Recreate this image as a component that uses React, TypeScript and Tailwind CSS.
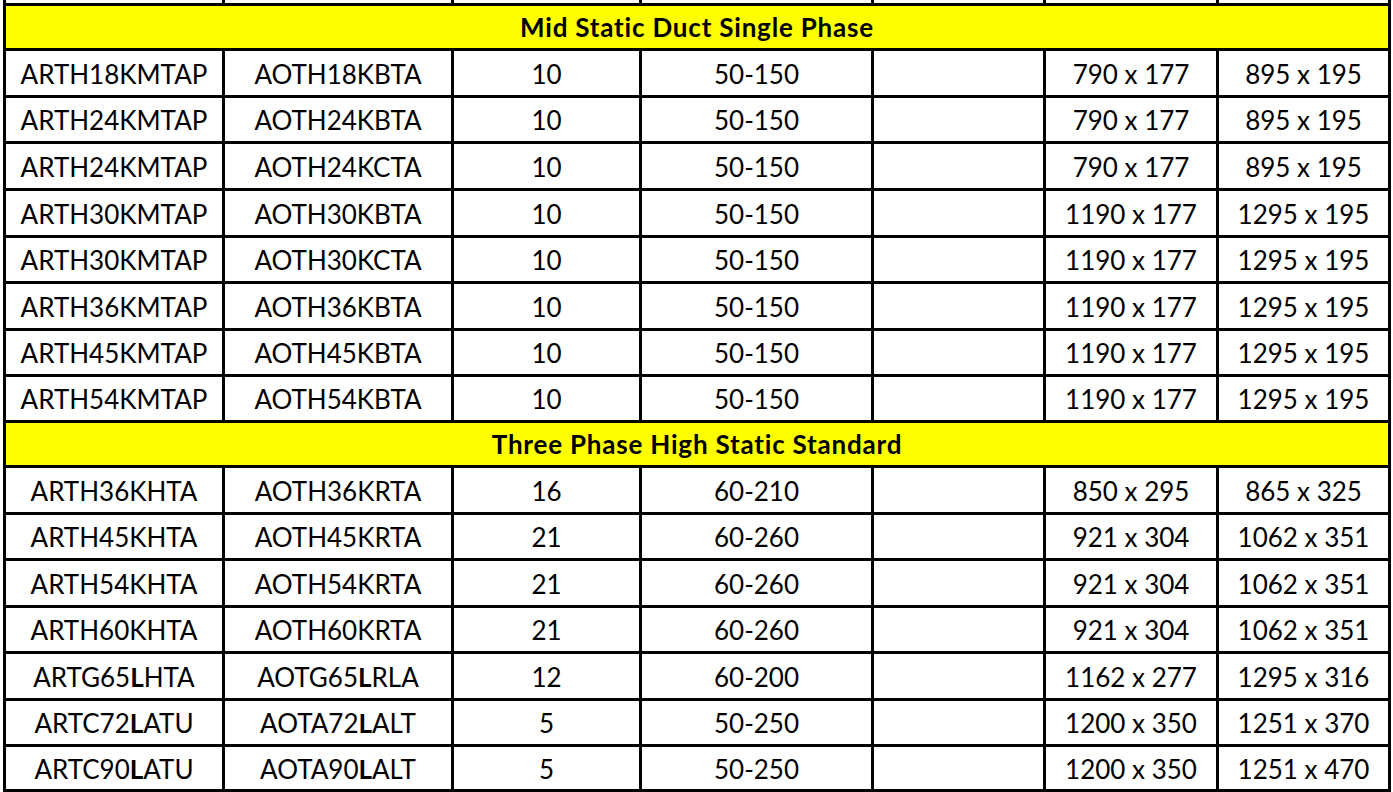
import React from "react";

type Cell = string;
type DataRow = { cells: Cell[]; h: string };
type Section = { title: string; h: string; rows: DataRow[] };

const W = ["w-[216px]", "w-[226px]", "w-[185px]", "w-[229px]", "w-[169px]", "w-[170px]", "w-[169px]"];

const sections: Section[] = [
  {
    title: "Mid Static Duct Single Phase",
    h: "h-[42px]",
    rows: [
      { cells: ["ARTH18KMTAP", "AOTH18KBTA", "10", "50-150", "", "790 x 177", "895 x 195"], h: "h-[44px]" },
      { cells: ["ARTH24KMTAP", "AOTH24KBTA", "10", "50-150", "", "790 x 177", "895 x 195"], h: "h-[43px]" },
      { cells: ["ARTH24KMTAP", "AOTH24KCTA", "10", "50-150", "", "790 x 177", "895 x 195"], h: "h-[44px]" },
      { cells: ["ARTH30KMTAP", "AOTH30KBTA", "10", "50-150", "", "1190 x 177", "1295 x 195"], h: "h-[44px]" },
      { cells: ["ARTH30KMTAP", "AOTH30KCTA", "10", "50-150", "", "1190 x 177", "1295 x 195"], h: "h-[43px]" },
      { cells: ["ARTH36KMTAP", "AOTH36KBTA", "10", "50-150", "", "1190 x 177", "1295 x 195"], h: "h-[44px]" },
      { cells: ["ARTH45KMTAP", "AOTH45KBTA", "10", "50-150", "", "1190 x 177", "1295 x 195"], h: "h-[43px]" },
      { cells: ["ARTH54KMTAP", "AOTH54KBTA", "10", "50-150", "", "1190 x 177", "1295 x 195"], h: "h-[43px]" },
    ],
  },
  {
    title: "Three Phase High Static Standard",
    h: "h-[42px]",
    rows: [
      { cells: ["ARTH36KHTA", "AOTH36KRTA", "16", "60-210", "", "850 x 295", "865 x 325"], h: "h-[44px]" },
      { cells: ["ARTH45KHTA", "AOTH45KRTA", "21", "60-260", "", "921 x 304", "1062 x 351"], h: "h-[43px]" },
      { cells: ["ARTH54KHTA", "AOTH54KRTA", "21", "60-260", "", "921 x 304", "1062 x 351"], h: "h-[44px]" },
      { cells: ["ARTH60KHTA", "AOTH60KRTA", "21", "60-260", "", "921 x 304", "1062 x 351"], h: "h-[43px]" },
      { cells: ["ARTG65*L*HTA", "AOTG65*L*RLA", "12", "60-200", "", "1162 x 277", "1295 x 316"], h: "h-[44px]" },
      { cells: ["ARTC72*L*ATU", "AOTA72*L*ALT", "5", "50-250", "", "1200 x 350", "1251 x 370"], h: "h-[43px]" },
      { cells: ["ARTC90*L*ATU", "AOTA90*L*ALT", "5", "50-250", "", "1200 x 350", "1251 x 470"], h: "h-[42px]" },
    ],
  },
];

function renderText(t: string) {
  const parts = t.split("*");
  return parts.map((p, i) =>
    i % 2 === 1 ? (
      <span key={i} className="font-bold">
        {p}
      </span>
    ) : (
      <span key={i}>{p}</span>
    )
  );
}

export default function App() {
  return (
    <div
      className="w-[1393px] h-[792px] overflow-hidden bg-white text-black"
      style={{ fontFamily: "Lato, 'Open Sans', sans-serif" }}
    >
      <div className="ml-[3px] w-max border-l-[3px] border-black">
        {/* partial row at top */}
        <div className="flex h-[3px]">
          {W.map((w, i) => (
            <div key={i} className={`${w} box-content border-r-[3px] border-black`} />
          ))}
        </div>
        <div className="border-t-[3px] border-black">
          {sections.map((s, si) => (
            <div key={si}>
              <div
                className={`${s.h} w-[1382px] box-content bg-[#ffff00] border-r-[3px] border-b-[3px] border-black flex items-center justify-center text-[26px] tracking-[0.8px] font-bold leading-none`}
              >
                {s.title}
              </div>
              {s.rows.map((r, ri) => (
                <div key={ri} className={`flex ${r.h} box-content border-b-[3px] border-black`}>
                  {r.cells.map((c, ci) => (
                    <div
                      key={ci}
                      className={`${W[ci]} box-content border-r-[3px] border-black flex items-center justify-center text-[26px] leading-none pt-[1px]`}
                    >
                      {renderText(c)}
                    </div>
                  ))}
                </div>
              ))}
            </div>
          ))}
        </div>
      </div>
    </div>
  );
}
